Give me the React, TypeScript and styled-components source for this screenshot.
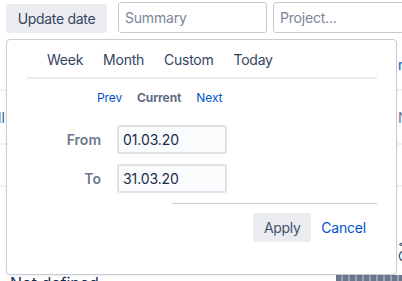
import React from "react";
import styled, { createGlobalStyle } from "styled-components";

const Global = createGlobalStyle`
  html, body { margin: 0; padding: 0; background: #fff; overflow: hidden; }
  body { font-family: Inter, "Noto Sans", "Liberation Sans", sans-serif; width: 402px; height: 281px; }
  * { box-sizing: border-box; }
`;

const Page = styled.div`
  position: relative;
  width: 402px;
  height: 281px;
  overflow: hidden;
`;

const TopBar = styled.div`
  display: flex;
  align-items: flex-start;
  padding: 2px 0 0 6px;
  height: 40px;
`;

const GreyButton = styled.button`
  flex: none;
  display: inline-flex;
  align-items: center;
  justify-content: center;
  white-space: nowrap;
  height: 29px;
  width: 101px;
  padding: 0;
  margin-top: 2px;
  border: none;
  border-radius: 3px;
  background: #ebecf0;
  color: #344563;
  font-family: inherit;
  font-size: 14px;
  letter-spacing: -0.3px;
`;

const TextField = styled.div<{ $w: number; $ml: number }>`
  width: ${(p) => p.$w}px;
  margin-left: ${(p) => p.$ml}px;
  flex: none;
  height: 31px;
  border: 1px solid #c6cad1;
  border-radius: 3px;
  padding: 0 6px;
  display: flex;
  align-items: center;
  color: #7a869a;
  font-size: 14px;
  letter-spacing: -0.2px;
`;

const Table = styled.div`
  display: flex;
  flex-direction: column;
`;

const Row = styled.div<{ $h: number; $line?: boolean }>`
  height: ${(p) => p.$h}px;
  display: flex;
  justify-content: space-between;
  align-items: center;
  border-bottom: ${(p) => (p.$line ? "2px solid #f0f1f4" : "none")};
  font-size: 14px;
  color: #42526e;
`;

const EdgeText = styled.span<{ $color?: string; $right?: boolean }>`
  color: ${(p) => p.$color || "#42526e"};
  margin-left: ${(p) => (p.$right ? "0" : "-2px")};
  margin-right: ${(p) => (p.$right ? "-10px" : "0")};
  width: ${(p) => (p.$right ? "14px" : "auto")};
`;

const StackRight = styled.div`
  display: flex;
  flex-direction: column;
  gap: 0;
  margin-right: -10px;
  width: 14px;
  color: #344563;
  font-size: 13px;
  line-height: 12px;
`;

const StackItem = styled.span<{ $mt?: number }>`
  display: block;
  height: 12px;
  overflow: hidden;
  margin-top: ${(p) => p.$mt || 0}px;
`;

const BottomRow = styled.div`
  display: flex;
  align-items: flex-start;
  justify-content: space-between;
  padding: 0 0 0 10px;
  height: 20px;
  font-size: 16px;
  line-height: 18px;
  color: #172b4d;
`;

const Tag = styled.span`
  display: inline-block;
  width: 66px;
  height: 8px;
  margin-top: 1px;
  background: repeating-linear-gradient(90deg, #6b778c 0 5px, #9aa3b2 5px 7px);
`;

/* Popup */

const Popup = styled.div`
  position: absolute;
  left: 6px;
  top: 39px;
  width: 391px;
  height: 236px;
  background: #fff;
  border: 1px solid #c9ccd2;
  border-radius: 4px;
  box-shadow: 0 1px 2px rgba(9, 30, 66, 0.08);
  display: flex;
  flex-direction: column;
`;

const Tabs = styled.div`
  display: flex;
  gap: 20px;
  margin: 0 19px 0 20px;
  padding: 10px 0 7px 20px;
  border-bottom: 2px solid #ebecf0;
`;

const Tab = styled.span`
  font-size: 14px;
  line-height: 20px;
  color: #344563;
  letter-spacing: -0.25px;
`;

const Nav = styled.div`
  display: flex;
  gap: 15px;
  padding: 11px 0 0 90px;
  font-size: 12px;
  line-height: 16px;
  letter-spacing: -0.1px;
`;

const NavLink = styled.span<{ $active?: boolean }>`
  color: ${(p) => (p.$active ? "#5e6c84" : "#0052cc")};
  font-weight: ${(p) => (p.$active ? 700 : 400)};
`;

const Fields = styled.div`
  display: grid;
  grid-template-columns: 94px 110px;
  column-gap: 16px;
  row-gap: 10px;
  padding: 19px 0 0 0;
  align-items: center;
`;

const Label = styled.span`
  text-align: right;
  font-size: 14px;
  font-weight: 600;
  color: #6b778c;
`;

const DateInput = styled.div`
  height: 29px;
  border: 2px solid #dfe1e6;
  border-radius: 3px;
  background: #fafbfc;
  padding: 0 4px;
  display: flex;
  align-items: center;
  font-size: 14px;
  color: #172b4d;
  letter-spacing: -0.1px;
`;

const Footer = styled.div`
  margin: 10px 19px 0 165px;
  padding-top: 9px;
  border-top: 1px solid #c9ccd2;
  display: flex;
  justify-content: flex-end;
  align-items: center;
  gap: 10px;
  padding-right: 11px;
`;

const ApplyButton = styled(GreyButton)`
  margin-top: 0;
  width: 58px;
  color: #42526e;
`;

const LinkButton = styled.span`
  font-size: 14px;
  color: #0052cc;
  letter-spacing: -0.2px;
`;

export default function App() {
  return (
    <Page>
      <Global />
      <TopBar>
        <GreyButton>Update date</GreyButton>
        <TextField $w={149} $ml={11}>Summary</TextField>
        <TextField $w={150} $ml={6}>Project...</TextField>
      </TopBar>
      <Table>
        <Row $h={51} $line>
          <span />
          <EdgeText $right $color="#0052cc">n</EdgeText>
        </Row>
        <Row $h={54} $line>
          <EdgeText>ll</EdgeText>
          <EdgeText $right $color="#6b778c">N</EdgeText>
        </Row>
        <Row $h={42} $line>
          <span />
          <span />
        </Row>
        <Row $h={87}>
          <span />
          <StackRight>
            <StackItem $mt={38}>&lt;</StackItem>
            <StackItem>C</StackItem>
          </StackRight>
        </Row>
        <BottomRow>
          <span>Not defined</span>
          <Tag />
        </BottomRow>
      </Table>

      <Popup>
        <Tabs>
          <Tab>Week</Tab>
          <Tab>Month</Tab>
          <Tab>Custom</Tab>
          <Tab>Today</Tab>
        </Tabs>
        <Nav>
          <NavLink>Prev</NavLink>
          <NavLink $active>Current</NavLink>
          <NavLink>Next</NavLink>
        </Nav>
        <Fields>
          <Label>From</Label>
          <DateInput>01.03.20</DateInput>
          <Label>To</Label>
          <DateInput>31.03.20</DateInput>
        </Fields>
        <Footer>
          <ApplyButton>Apply</ApplyButton>
          <LinkButton>Cancel</LinkButton>
        </Footer>
      </Popup>
    </Page>
  );
}
